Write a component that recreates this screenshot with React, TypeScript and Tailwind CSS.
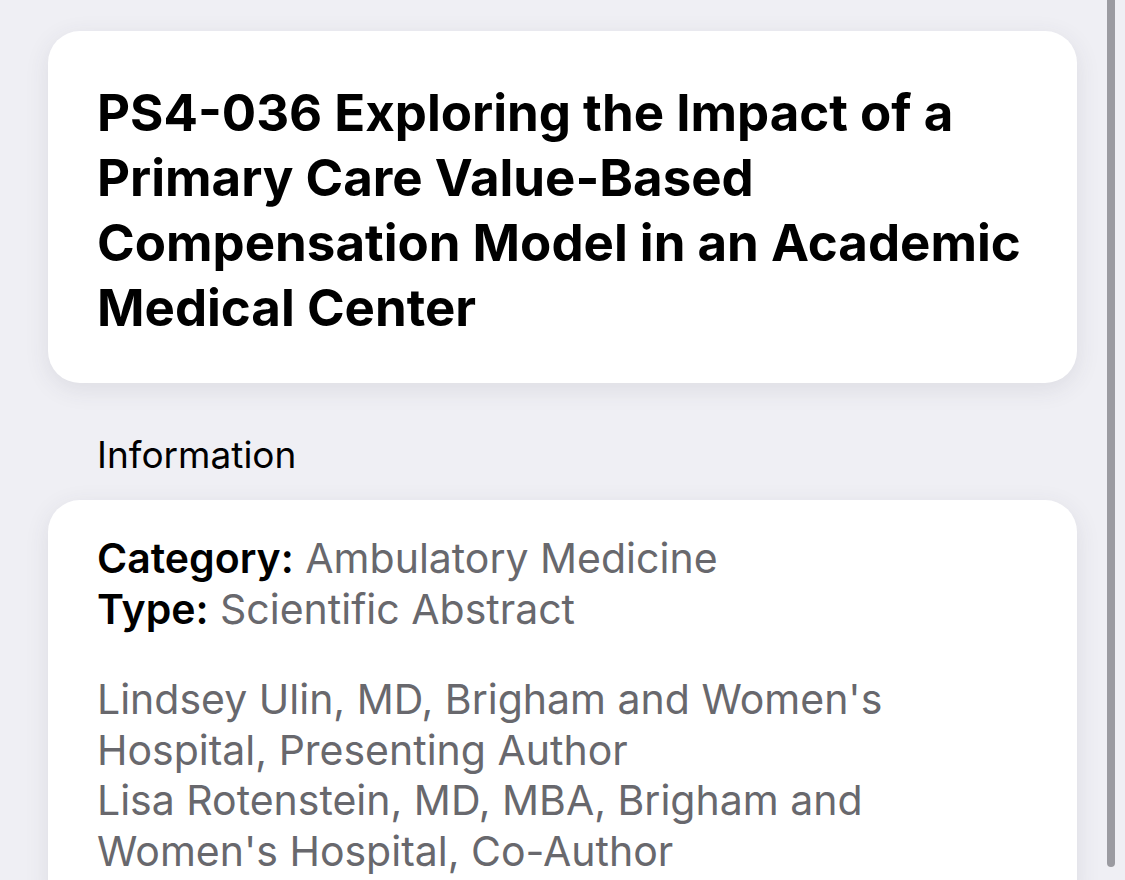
export default function App() {
  return (
    <div className="relative min-h-[880px] bg-[#efeff4] font-['Inter','Noto_Sans',sans-serif] antialiased">
      <div className="px-12 pt-[31px]">
        <div className="rounded-[32px] bg-white px-[49px] pt-[49px] pb-[43px] shadow-[0_6px_24px_rgba(60,60,80,0.10)]">
          <h1 className="text-[51px] font-bold leading-[65px] text-black">
            PS4-036 Exploring the Impact of a
            <br />
            Primary Care Value-Based
            <br />
            Compensation Model in an Academic
            <br />
            Medical Center
          </h1>
        </div>

        <div className="mt-[47px] px-[49px] text-[37px] leading-[50px] text-black">Information</div>

        <div className="mt-5 rounded-[32px] bg-white px-[49px] pt-[33px] pb-10 shadow-[0_6px_24px_rgba(60,60,80,0.10)]">
          <div className="text-[41px] leading-[50.5px] text-[#68686d]">
            <div>
              <span className="font-semibold text-black">Category:</span> Ambulatory Medicine
            </div>
            <div>
              <span className="font-semibold text-black">Type:</span> Scientific Abstract
            </div>
            <div className="mt-[40px]">
              Lindsey Ulin, MD, Brigham and Women's
              <br />
              Hospital, Presenting Author
              <br />
              Lisa Rotenstein, MD, MBA, Brigham and
              <br />
              Women's Hospital, Co-Author
            </div>
          </div>
        </div>
      </div>

      {/* overlay scroll indicator */}
      <div className="fixed top-0 right-[10px] h-[867px] w-2 rounded-b-full bg-[#9b9ba1]" />
    </div>
  );
}
